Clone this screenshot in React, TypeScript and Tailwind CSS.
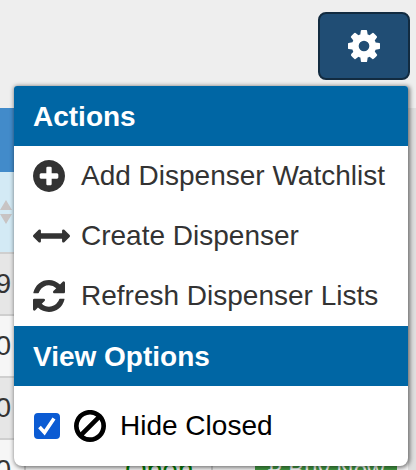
import { useState } from "react";

const icons = {
  cog: {
    width: 1536,
    d: "M1024 640q0 106 -75 181t-181 75t-181 -75t-75 -181t75 -181t181 -75t181 75t75 181zM1536 749v-222q0 -12 -8 -23t-20 -13l-185 -28q-19 -54 -39 -91q35 -50 107 -138q10 -12 10 -25t-9 -23q-27 -37 -99 -108t-94 -71q-12 0 -26 9l-138 108q-44 -23 -91 -38q-16 -136 -29 -186q-7 -28 -36 -28h-222q-14 0 -24.5 8.5t-11.5 21.5l-28 184q-49 16 -90 37l-141 -107q-10 -9 -25 -9q-14 0 -25 11q-126 114 -165 168q-7 10 -7 23q0 12 8 23q15 21 51 66.5t54 70.5q-27 50 -41 99l-183 27q-13 2 -21 12.5t-8 23.5v222q0 12 8 23t19 13l186 28q14 46 39 92q-40 57 -107 138q-10 12 -10 24q0 10 9 23q26 36 98.5 107.5t94.5 71.5q13 0 26 -10l138 -107q44 23 91 38q16 136 29 186q7 28 36 28h222q14 0 24.5 -8.5t11.5 -21.5l28 -184q49 -16 90 -37l142 107q9 9 24 9q13 0 25 -10q129 -119 165 -170q7 -8 7 -22q0 -12 -8 -23q-15 -21 -51 -66.5t-54 -70.5q26 -50 41 -98l183 -28q13 -2 21 -12.5t8 -23.5z",
  },
  plus: {
    width: 1536,
    d: "M1216 576v128q0 26 -19 45t-45 19h-256v256q0 26 -19 45t-45 19h-128q-26 0 -45 -19t-19 -45v-256h-256q-26 0 -45 -19t-19 -45v-128q0 -26 19 -45t45 -19h256v-256q0 -26 19 -45t45 -19h128q26 0 45 19t19 45v256h256q26 0 45 19t19 45zM1536 640q0 -209 -103 -385.5t-279.5 -279.5t-385.5 -103t-385.5 103t-279.5 279.5t-103 385.5t103 385.5t279.5 279.5t385.5 103t385.5 -103t279.5 -279.5t103 -385.5z",
  },
  arrows: {
    width: 1792,
    d: "M1792 640q0 -26 -19 -45l-256 -256q-19 -19 -45 -19t-45 19t-19 45v128h-1024v-128q0 -26 -19 -45t-45 -19t-45 19l-256 256q-19 19 -19 45t19 45l256 256q19 19 45 19t45 -19t19 -45v-128h1024v128q0 26 19 45t45 19t45 -19l256 -256q19 -19 19 -45z",
  },
  refresh: {
    width: 1536,
    d: "M1511 480q0 -5 -1 -7q-64 -268 -268 -434.5t-478 -166.5q-146 0 -282.5 55t-243.5 157l-129 -129q-19 -19 -45 -19t-45 19t-19 45v448q0 26 19 45t45 19h448q26 0 45 -19t19 -45t-19 -45l-137 -137q71 -66 161 -102t187 -36q134 0 250 65t186 179q11 17 53 117q8 23 30 23h192q13 0 22.5 -9.5t9.5 -22.5zM1536 1280v-448q0 -26 -19 -45t-45 -19h-448q-26 0 -45 19t-19 45t19 45l138 138q-148 137 -349 137q-134 0 -250 -65t-186 -179q-11 -17 -53 -117q-8 -23 -30 -23h-199q-13 0 -22.5 9.5t-9.5 22.5v7q65 268 270 434.5t480 166.5q146 0 284 -55.5t245 -156.5l130 129q19 19 45 19t45 -19t19 -45z",
  },
  ban: {
    width: 1536,
    d: "M1312 643q0 161 -87 295l-754 -753q137 -89 297 -89q111 0 211.5 43.5t173.5 116.5t116 174.5t43 212.5zM313 344l755 754q-135 91 -300 91q-148 0 -273 -73t-198 -199t-73 -274q0 -162 89 -299zM1536 643q0 -157 -61 -300t-163.5 -246t-245 -164t-298.5 -61t-298.5 61t-245 164t-163.5 246t-61 300t61 299.5t163.5 245.5t245 164t298.5 61t298.5 -61t245 -164t163.5 -245.5t61 -299.5z",
  },
};

// Glyphs are drawn on a y-up grid, so the path is flipped
function Icon({ name, className }: { name: keyof typeof icons; className: string }) {
  const { width, d } = icons[name];
  return (
    <svg viewBox={`0 0 ${width} 1536`} className={className} fill="currentColor" aria-hidden="true">
      <path transform="translate(0 1408) scale(1 -1)" d={d} />
    </svg>
  );
}

const actions: { icon: keyof typeof icons; label: string; size: string }[] = [
  { icon: "plus", label: "Add Dispenser Watchlist", size: "w-8 h-8" },
  { icon: "arrows", label: "Create Dispenser", size: "w-[37px] h-8" },
  { icon: "refresh", label: "Refresh Dispenser Lists", size: "w-8 h-8" },
];

const rows = [
  { value: "9", open: false },
  { value: "0", open: false },
  { value: "0", open: false },
  { value: "0", open: true },
];

export default function App() {
  const [hideClosed, setHideClosed] = useState(true);

  return (
    <div className="relative h-screen overflow-hidden bg-[#eeeeee] font-['Liberation_Sans',Arial,sans-serif] text-[28px] text-[#333333]">
      <div className="flex justify-end pt-3 pr-[6px]">
        <button
          type="button"
          aria-label="Settings"
          className="flex h-[68px] w-[92px] items-center justify-center rounded-lg border-2 border-[#122b40] bg-[#204d74] text-white"
        >
          <Icon name="cog" className="h-8 w-8" />
        </button>
      </div>

      <div className="mt-7 bg-[#dfdfdf] pr-2">
        <table className="w-full table-fixed border-collapse">
          <colgroup>
            <col className="w-[25px]" />
            <col className="w-[187px]" />
            <col />
          </colgroup>
          <thead>
            <tr className="h-16 bg-[#428bca]">
              <th colSpan={3}></th>
            </tr>
            <tr className="h-[81px] bg-[#d3eaf5]">
              <th colSpan={3} className="border-b-2 border-[#cfcfcf] p-0">
                <svg viewBox="0 0 12 26" className="h-[26px] w-3" fill="#c8c4c4" aria-hidden="true">
                  <path d="M0 11L6 1L12 11ZM0 15L6 25L12 15Z" />
                </svg>
              </th>
            </tr>
          </thead>
          <tbody>
            {rows.map((row, i) => (
              <tr key={i} className="h-[62px] border-b-2 border-[#cfcfcf] odd:bg-[#e6e6e6] even:bg-[#f6f6f6]">
                <td className="border-r-2 border-[#cfcfcf] p-0 pr-[13px] leading-8">
                  <span className="flex justify-end">{row.value}</span>
                </td>
                <td className="border-r-2 border-[#cfcfcf] p-0 pl-[99px] leading-8 text-[#008000]">
                  {row.open && "Open"}
                </td>
                <td className="p-0 pl-[42px]">
                  {row.open && (
                    <button
                      type="button"
                      className="block h-[46px] w-[142px] whitespace-nowrap bg-[#449d44] text-center text-2xl leading-[46px] text-white"
                    >
                      ₽ Buy Now
                    </button>
                  )}
                </td>
              </tr>
            ))}
          </tbody>
        </table>
      </div>

      <div className="absolute top-[86px] right-2 left-[14px] overflow-hidden rounded-t-[3px] rounded-b-lg bg-white shadow-[1px_1px_4px_1px_rgba(0,0,0,0.5)]">
        <h2 className="h-[60px] bg-[#0066a4] pl-[19px] leading-[62px] font-bold text-white">Actions</h2>
        <ul>
          {actions.map((a) => (
            <li key={a.label}>
              <button type="button" className="flex h-[60px] w-full items-center pl-[19px] text-left">
                <span className="flex w-12 shrink-0">
                  <Icon name={a.icon} className={a.size} />
                </span>
                <span className="whitespace-nowrap leading-[62px]">{a.label}</span>
              </button>
            </li>
          ))}
        </ul>
        <h2 className="h-[60px] bg-[#0066a4] pl-[19px] leading-[62px] font-bold text-white">View Options</h2>
        <label className="flex h-20 items-center pl-5 text-black">
          <input
            type="checkbox"
            checked={hideClosed}
            onChange={(e) => setHideClosed(e.target.checked)}
            className="peer h-[26px] w-[26px] appearance-none rounded-[4px] border-2 border-[#767676] checked:border-[#0b5bd3] checked:bg-[#0b5bd3]"
          />
          <svg
            viewBox="0 0 26 26"
            className="pointer-events-none invisible -ml-[26px] h-[26px] w-[26px] peer-checked:visible"
            fill="none"
            stroke="white"
            strokeWidth="3.6"
            aria-hidden="true"
          >
            <path d="M5.5 14L10.5 19.5L20 5.5" />
          </svg>
          <Icon name="ban" className="ml-[14px] h-8 w-8" />
          <span className="ml-[14px]">Hide Closed</span>
        </label>
      </div>
    </div>
  );
}
